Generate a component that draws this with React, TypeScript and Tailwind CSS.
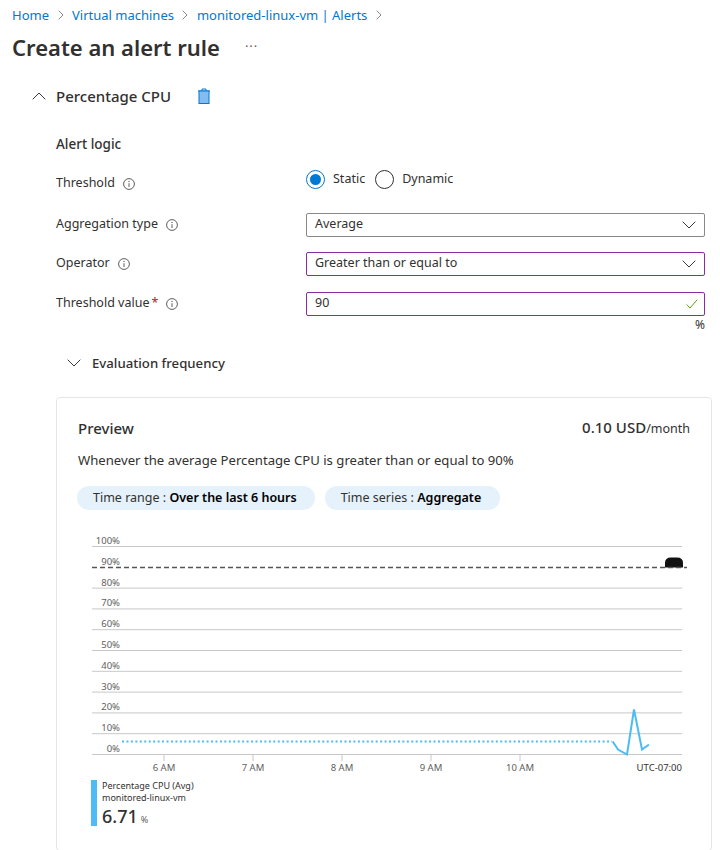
const font = { fontFamily: '"Noto Sans", "Open Sans", sans-serif' };

function Chevron({ up, className }: { up?: boolean; className?: string }) {
  return (
    <svg width="14" height="8" viewBox="0 0 14 8" fill="none" className={className}>
      <path d={up ? "M0.7 7.3 7 1l6.300 6.300" : "M0.7 0.7 7 7l6.300-6.300"} stroke="#3b3a39" strokeWidth="1" />
    </svg>
  );
}

function Info() {
  return (
    <svg width="12" height="12" viewBox="0 0 12 12" fill="none" className="shrink-0">
      <circle cx="6" cy="6" r="5.400" stroke="#605e5c" strokeWidth="1" />
      <path d="M6 5.200V9" stroke="#605e5c" strokeWidth="1" />
      <circle cx="6" cy="3.400" r="0.700" fill="#605e5c" />
    </svg>
  );
}

function Crumb({ children }: { children: string }) {
  return (
    <>
      <span className="text-[#0078d4]">{children}</span>
      <svg width="6" height="10" viewBox="0 0 6 10" fill="none">
        <path d="M0.700 0.700 5 5 0.700 9.300" stroke="#8a8886" strokeWidth="1" />
      </svg>
    </>
  );
}

function Row({ label, required, children, className }: { label: string; required?: boolean; children: React.ReactNode; className?: string }) {
  return (
    <div className={`flex items-center ${className ?? ""}`}>
      <div className="flex w-[250px] items-center text-[12.500px] text-[#323130]">
        <span>{label}</span>
        {required && <span className="ml-[2px] text-[#a4262c]">*</span>}
        <span className="ml-[8px]"><Info /></span>
      </div>
      {children}
    </div>
  );
}

function Select({ value, purple }: { value: string; purple?: boolean }) {
  return (
    <div className={`flex h-6 w-[399px] items-center justify-between rounded-[2px] border pl-2 pr-2 text-[12.500px] text-[#323130] ${purple ? "border-[#8a2da5]" : "border-[#8a8886]"}`}>
      <span>{value}</span>
      <Chevron />
    </div>
  );
}

const ticks = ["100%", "90%", "80%", "70%", "60%", "50%", "40%", "30%", "20%", "10%", "0%"];

function Chart() {
  return (
    <svg width="612" height="252" viewBox="0 0 612 252" className="mt-[23px] block" fontFamily='"Noto Sans", sans-serif'>
      {ticks.map((t, i) => {
        const y = 13.500 + i * 20.800;
        return (
          <g key={t}>
            {i !== 1 && <line x1="14" x2="604" y1={y} y2={y} stroke="#c8c8c8" strokeWidth="1" />}
            <text x="42" y={y - 2.500} textAnchor="end" fontSize="9.500" fill="#605e5c">{t}</text>
          </g>
        );
      })}
      <path d="M587 30q0-5.500 6-5.500h6q6 0 6 5.500v4.500h-18z" fill="#111" />
      <line x1="14" x2="609" y1="34.500" y2="34.500" stroke="#555" strokeWidth="1.500" strokeDasharray="5 3" />
      {[86, 175, 264, 353, 442].map((x, i) => (
        <g key={x}>
          <line x1={x} x2={x} y1="222" y2="228" stroke="#c8c8c8" />
          <text x={x} y="238" textAnchor="middle" fontSize="9.500" fill="#605e5c">{["6 AM", "7 AM", "8 AM", "9 AM", "10 AM"][i]}</text>
        </g>
      ))}
      <text x="604" y="238" textAnchor="end" fontSize="9.500" fill="#323130">UTC-07:00</text>
      <line x1="44" x2="534" y1="208.500" y2="208.500" stroke="#4dbcf5" strokeWidth="2" strokeDasharray="2 2.450" />
      <path d="M534.700 208.500 540 216.500 549 221.500 556 176.500 564 216.500 571 211.500" fill="none" stroke="#4dbcf5" strokeWidth="2" />
    </svg>
  );
}

export default function App() {
  return (
    <div className="h-[850px] w-[720px] overflow-hidden bg-white" style={font}>
      <div className="flex items-center gap-[8.500px] pl-3 pt-[6px] text-[13px] leading-[18px]">
        <Crumb>Home</Crumb>
        <Crumb>Virtual machines</Crumb>
        <Crumb>monitored-linux-vm | Alerts</Crumb>
      </div>

      <div className="mt-[6px] flex items-center pl-3">
        <h1 className="text-[22px] leading-[34px] font-semibold text-[#323130]">Create an alert rule</h1>
        <span className="ml-[25px] mb-[2px] text-[13px] leading-none tracking-[1px] text-[#605e5c]">···</span>
      </div>

      <div className="mt-[21px] flex items-center pl-[32px]">
        <Chevron up />
        <span className="ml-[10px] text-[15px] font-medium text-[#323130]">Percentage CPU</span>
        <svg width="14" height="16" viewBox="0 0 14 16" className="ml-[26px]" fill="none">
          <path d="M1 3h12M5 3V1h4v2" stroke="#0078d4" strokeWidth="1" />
          <rect x="2" y="3" width="10" height="12.500" fill="#83bdf0" stroke="#0078d4" strokeWidth="1" />
        </svg>
      </div>

      <div className="pl-[56px]">
        <div className="mt-[27px] text-[13.500px] leading-[18px] font-medium text-[#323130]">Alert logic</div>

        <Row label="Threshold" className="mt-[19px] h-6">
          <div className="mb-2 flex items-center text-[12.500px] text-[#323130]">
            <span className="flex h-[19px] w-[19px] items-center justify-center rounded-full border border-[#0078d4]">
              <span className="h-[11px] w-[11px] rounded-full bg-[#0078d4]" />
            </span>
            <span className="ml-2">Static</span>
            <span className="ml-[10px] h-[19px] w-[19px] rounded-full border border-[#323130]" />
            <span className="ml-2">Dynamic</span>
          </div>
        </Row>
        <Row label="Aggregation type" className="mt-[17px]">
          <Select value="Average" />
        </Row>
        <Row label="Operator" className="mt-[15px]">
          <Select value="Greater than or equal to" purple />
        </Row>
        <Row label="Threshold value" required className="mt-[16px]">
          <div className="flex h-6 w-[399px] items-center justify-between rounded-[2px] border border-[#8a2da5] pl-2 pr-1.5 text-[12.500px] text-[#323130]">
            <span>90</span>
            <svg width="12" height="10" viewBox="0 0 12 10" fill="none">
              <path d="M0.700 5.500 4 9l7.300-8.300" stroke="#57a300" strokeWidth="1" />
            </svg>
          </div>
        </Row>
        <div className="mt-[1px] w-[649px] text-right text-[12px] leading-4 text-[#323130]">%</div>

        <div className="mt-[21px] flex items-center pl-[11px]">
          <Chevron />
          <span className="ml-[11px] text-[13.200px] font-medium text-[#323130]">Evaluation frequency</span>
        </div>

        <div className="mt-[24px] h-[454px] w-[656px] rounded-[4px] border border-[#e5e5e5] px-[21px] pt-[19px]">
          <div className="flex items-center justify-between">
            <span className="text-[15px] leading-5 font-medium text-[#323130]">Preview</span>
            <span className="text-[15px] leading-5 font-medium text-[#323130]">0.10 USD<span className="text-[12.500px] font-normal">/month</span></span>
          </div>
          <div className="mt-[12px] text-[13.150px] leading-[18px] text-[#323130]">Whenever the average Percentage CPU is greater than or equal to 90%</div>
          <div className="mt-[17px] ml-[-1px] flex gap-[10px] text-[12.500px] text-[#323130]">
            <div className="flex h-6 items-center rounded-full bg-[#e5f1fb] pl-4 pr-[18px]">Time range :&nbsp;<b className="font-semibold text-black">Over the last 6 hours</b></div>
            <div className="flex h-6 items-center rounded-full bg-[#e5f1fb] pl-4 pr-[19px]">Time series :&nbsp;<b className="font-semibold text-black">Aggregate</b></div>
          </div>
          <Chart />
          <div className="mt-[-5px] ml-[13px] flex h-[46px] text-[#323130]">
            <div className="w-1.5 bg-[#4dbcf5]" />
            <div className="ml-[5px]">
              <div className="text-[9px] leading-[12px]">Percentage CPU (Avg)</div>
              <div className="text-[9px] leading-[12px]">monitored-linux-vm</div>
              <div className="text-[18px] leading-[24px] font-medium">6.71<span className="ml-[3px] text-[9px] font-normal text-[#605e5c]">%</span></div>
            </div>
          </div>
        </div>
      </div>
    </div>
  );
}
